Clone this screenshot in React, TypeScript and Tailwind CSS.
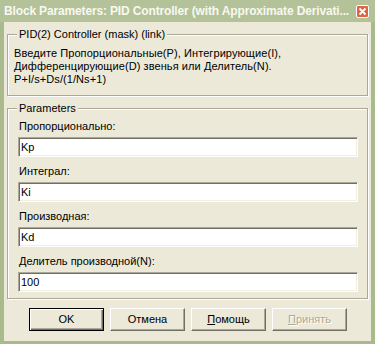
import React from "react";

const sunken =
  "border border-t-[#aca899] border-l-[#aca899] border-r-white border-b-white shadow-[inset_1px_1px_0_#716f64,inset_-1px_-1px_0_#f1efe2] bg-white";

const etched =
  "border border-[#aca899] shadow-[inset_1px_1px_0_#ffffff,1px_1px_0_#ffffff]";

const fields = [
  { label: "Пропорционально:", value: "Kp" },
  { label: "Интеграл:", value: "Ki" },
  { label: "Производная:", value: "Kd" },
  { label: "Делитель производной(N):", value: "100" },
];

function CloseButton() {
  return (
    <div className="grid size-[13px] shrink-0 place-items-center rounded-[2px] border border-white bg-[#e0643f]">
      <svg width="9" height="9" viewBox="0 0 9 9" aria-hidden>
        <path d="M1.5 1.5 L7.5 7.5 M7.5 1.5 L1.5 7.5" stroke="#fff" strokeWidth="1.8" />
      </svg>
    </div>
  );
}

function Button({
  children,
  isDefault,
  disabled,
}: {
  children: React.ReactNode;
  isDefault?: boolean;
  disabled?: boolean;
}) {
  const frame = isDefault
    ? "border border-black shadow-[inset_1px_1px_0_#ffffff,inset_-1px_-1px_0_#716f64,inset_-2px_-2px_0_#aca899]"
    : "border border-t-white border-l-white border-r-[#716f64] border-b-[#716f64] shadow-[inset_-1px_-1px_0_#aca899]";
  return (
    <div
      className={`flex h-[23px] w-[75px] items-center justify-center bg-[#ece9d8] ${frame} ${
        disabled ? "text-[#aca899] [text-shadow:1px_1px_0_#ffffff]" : "text-black"
      }`}
    >
      {children}
    </div>
  );
}

export default function App() {
  return (
    <div className="flex h-[344px] w-[375px] flex-col overflow-hidden bg-[#a9ba8c] font-['Liberation_Sans',Arial,sans-serif] text-[11px] leading-[13px] text-black">
      {/* title bar */}
      <div className="flex h-[22px] shrink-0 items-center bg-[#b3c298] pl-[4px] pr-[6px]">
        <span className="min-w-0 flex-1 overflow-hidden whitespace-nowrap text-[12px] font-bold tracking-[-0.15px] text-[#f8f8f0]">
          Block Parameters: PID Controller (with Approximate Derivati...
        </span>
        <CloseButton />
      </div>

      {/* client area */}
      <div className="mx-[4px] mb-[3px] flex flex-1 flex-col bg-[#ece9d8] px-[3px]">
        <fieldset className={`mt-[5px] pb-[9px] pl-[6px] pr-[6px] ${etched}`}>
          <legend className="ml-[3px] bg-[#ece9d8] px-[2px] leading-[14px]">
            PID(2) Controller (mask) (link)
          </legend>
          <div className="pt-[6px] tracking-[0.08px]">
            <p>Введите Пропорциональные(P), Интегрирующие(I),</p>
            <p>Дифференцирующие(D) звенья или Делитель(N).</p>
            <p>P+I/s+Ds/(1/Ns+1)</p>
          </div>
        </fieldset>

        <fieldset className={`mt-[5px] pb-[6px] pl-[10px] pr-[9px] ${etched}`}>
          <legend className="ml-[-1px] bg-[#ece9d8] px-[2px] leading-[14px]">Parameters</legend>
          <div className="flex flex-col gap-[8px] pt-[5px]">
            {fields.map((f) => (
              <div key={f.label} className="flex flex-col">
                <span className="pl-[1px]">{f.label}</span>
                <div className={`mt-[4px] flex h-[20px] items-center pl-[2px] text-black ${sunken}`}>
                  {f.value}
                </div>
              </div>
            ))}
          </div>
        </fieldset>

        <div className="mt-[9px] flex justify-center gap-[6px] pl-[1px]">
          <Button isDefault>OK</Button>
          <Button>Отмена</Button>
          <Button>
            <span>
              <u>П</u>омощь
            </span>
          </Button>
          <Button disabled>
            <span>
              <u>П</u>ринять
            </span>
          </Button>
        </div>
      </div>
    </div>
  );
}
